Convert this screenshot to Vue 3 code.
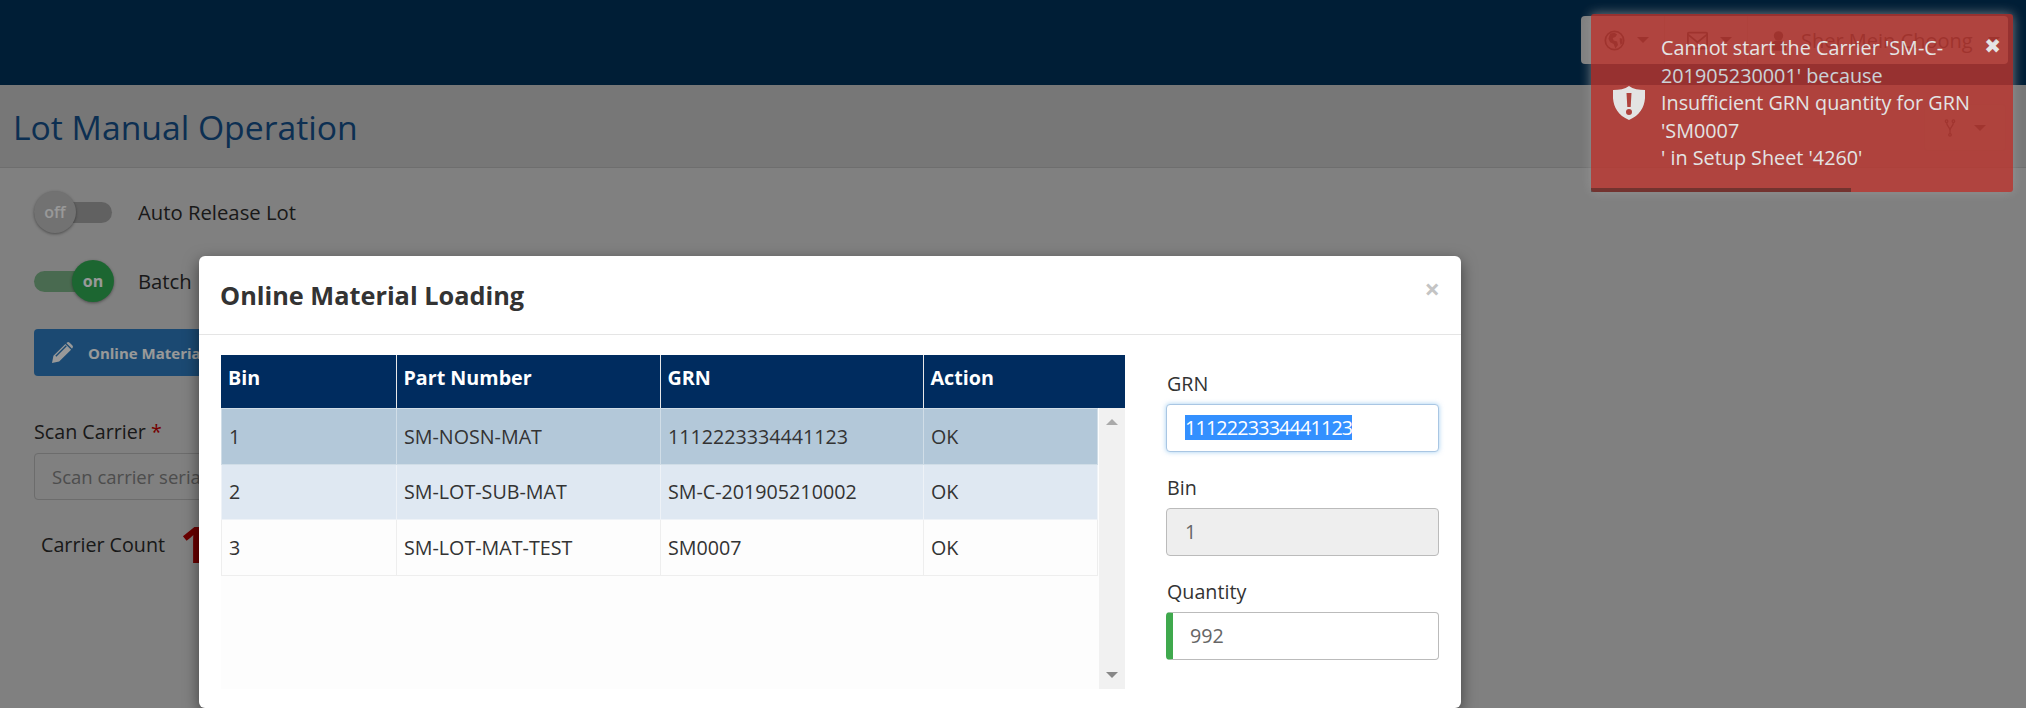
<template>
  <div class="page">
    <header class="top-bar">
      <div class="user-tools">
        <div class="tool globe-tool">
          <svg class="tool-icon" viewBox="0 0 24 24"><circle cx="12" cy="12" r="10.5" /><path class="land" d="M7 4l5-1 3 2-2 3-3 1 1 3 4 1 1 4-3 4-2-5-4-2-2-4zM18 9l3 1 0 5-2 2-1-4z" /></svg>
          <span class="caret"></span>
        </div>
        <div class="tool mail-tool">
          <svg class="tool-icon" viewBox="0 0 24 20"><rect x="1" y="1" width="22" height="18" rx="1" /><path d="M1 3l11 9 11-9" /></svg>
          <span class="caret"></span>
        </div>
        <div class="tool user-tool">
          <svg class="user-icon" viewBox="0 0 16 22"><circle cx="8" cy="6" r="5" /><path d="M0 22v-5c0-4 3-6 8-6s8 2 8 6v5z" /></svg>
          <span class="user-name">Sher Mein Choong</span>
          <span class="caret"></span>
        </div>
      </div>
    </header>

    <section class="page-head">
      <h1 class="page-title">Lot Manual Operation</h1>
      <div class="fork-btn">
        <svg class="fork-icon" viewBox="0 0 14 22"><path d="M3 4c0 6 4 5 4 10v4M11 4c0 6-4 5-4 10" /><circle cx="3" cy="3" r="1.500" /><circle cx="11" cy="3" r="1.500" /><circle cx="7" cy="19" r="1.500" /></svg>
        <span class="caret"></span>
      </div>
    </section>

    <main class="content">
      <div class="switch-row">
        <div class="switch">
          <span class="knob knob-off">off</span>
        </div>
        <span class="switch-label">Auto Release Lot</span>
      </div>
      <div class="switch-row">
        <div class="switch switch-on">
          <span class="knob knob-on">on</span>
        </div>
        <span class="switch-label">Batch</span>
      </div>

      <button class="load-btn">
        <svg class="pencil" viewBox="0 0 22 22"><path d="M0 22l1.500-7.500L14 2l6 6L7.500 20.500zM15.500 .8c1-1 2-1 3 0l2.700 2.700c1 1 1 2 0 3L21 7l-6-6z" /><path class="pencil-line" d="M4 15L15 4" /></svg>
        Online Material Loading
      </button>

      <label class="scan-label">Scan Carrier <span class="req">*</span></label>
      <div class="scan-input">Scan carrier serial</div>

      <div class="count-row">
        <span class="count-label">Carrier Count</span>
        <span class="count-value">1</span>
      </div>
    </main>

    <div class="overlay"></div>

    <div class="modal">
      <div class="modal-head">
        <h4 class="modal-title">Online Material Loading</h4>
        <span class="modal-close">×</span>
      </div>
      <div class="modal-body">
        <div class="grid-box">
          <table class="grid-head">
            <colgroup><col class="c1"><col class="c2"><col class="c3"><col></colgroup>
            <thead>
              <tr>
                <th v-for="c in columns" :key="c">{{ c }}</th>
              </tr>
            </thead>
          </table>
          <div class="grid-scroll">
            <table class="grid-rows">
              <colgroup><col class="c1"><col class="c2"><col class="c3"><col></colgroup>
              <tbody>
                <tr v-for="(r, i) in rows" :key="r.bin" :class="'row-' + i">
                  <td>{{ r.bin }}</td>
                  <td>{{ r.part }}</td>
                  <td>{{ r.grn }}</td>
                  <td>{{ r.action }}</td>
                </tr>
              </tbody>
            </table>
            <div class="scrollbar">
              <span class="arrow-up"></span>
              <span class="arrow-down"></span>
            </div>
          </div>
        </div>

        <form class="side-form">
          <label>GRN</label>
          <div class="field field-focus"><span class="selected">1112223334441123</span></div>
          <label>Bin</label>
          <div class="field field-disabled">1</div>
          <label>Quantity</label>
          <div class="field field-qty">992</div>
        </form>
      </div>
    </div>

    <div class="toast">
      <svg class="shield" viewBox="0 0 32 34"><path fill-rule="evenodd" d="M16 0c4 3 10 4 16 4 1 13-2 24-16 30C2 28-1 17 0 4 6 4 12 3 16 0zM13.500 7l.8 14h3.400l.8-14zM16 23a3 3 0 1 0 0 6 3 3 0 0 0 0-6z" /></svg>
      <div class="toast-msg">
        Cannot start the Carrier 'SM-C-201905230001' because Insufficient GRN quantity for GRN 'SM0007<br>' in Setup Sheet '4260'
      </div>
      <span class="toast-close">✖</span>
      <div class="toast-progress"></div>
    </div>
  </div>
</template>

<script setup>
const columns = ['Bin', 'Part Number', 'GRN', 'Action']

const rows = [
  { bin: 1, part: 'SM-NOSN-MAT', grn: '1112223334441123', action: 'OK' },
  { bin: 2, part: 'SM-LOT-SUB-MAT', grn: 'SM-C-201905210002', action: 'OK' },
  { bin: 3, part: 'SM-LOT-MAT-TEST', grn: 'SM0007', action: 'OK' },
]
</script>

<style>
html, body {
  margin: 0;
  overflow: hidden;
}
</style>

<style scoped>
.page {
  position: relative;
  height: 708px;
  overflow: hidden;
  background: #d5d5d5;
  font-family: "Open Sans", sans-serif;
  font-size: 19.7px;
  color: #2b2b2b;
}

.top-bar {
  height: 85px;
  background: #00325a;
  display: flex;
  justify-content: flex-end;
  align-items: flex-start;
  padding: 16px 18px 0 0;
  box-sizing: border-box;
}

.user-tools {
  display: flex;
  height: 48px;
  background: #d5d5d5;
  border-radius: 4px;
}

.tool {
  display: flex;
  align-items: center;
  gap: 12px;
  box-sizing: border-box;
  padding-left: 23px;
  border-right: 1px solid #c4c4c4;
}

.tool:last-child {
  border-right: none;
}

.globe-tool {
  width: 84px;
}

.mail-tool {
  width: 83px;
  padding-left: 22px;
}

.user-tool {
  width: 260px;
  gap: 15px;
}

.tool-icon {
  width: 21px;
  height: 21px;
  fill: none;
  stroke: #474747;
  stroke-width: 2;
}

.tool-icon .land {
  fill: #474747;
  stroke: none;
}

.user-icon {
  width: 15px;
  height: 21px;
  fill: #474747;
}

.user-name {
  font-size: 20px;
  color: #474747;
  white-space: nowrap;
}

.caret {
  width: 0;
  height: 0;
  border-left: 6px solid transparent;
  border-right: 6px solid transparent;
  border-top: 6px solid #474747;
}

.page-head {
  height: 83px;
  box-sizing: border-box;
  background: #c6c6c6;
  border-bottom: 1px solid #b8b8b8;
  display: flex;
  align-items: center;
  justify-content: space-between;
  padding: 2px 20px 0 13px;
}

.page-title {
  margin: 0;
  font-size: 33.7px;
  font-weight: 400;
  color: #144f89;
}

.fork-btn {
  width: 82px;
  height: 47px;
  box-sizing: border-box;
  margin-top: 1px;
  background: #cccccc;
  border: 1px solid #c0c0c0;
  border-radius: 4px;
  display: flex;
  align-items: center;
  justify-content: center;
  gap: 18px;
}

.fork-icon {
  width: 12px;
  height: 20px;
  fill: none;
  stroke: #555;
  stroke-width: 1.500;
}

.fork-btn .caret {
  border-top-color: #555;
}

.content {
  padding: 23px 34px 0;
  display: flex;
  flex-direction: column;
  align-items: flex-start;
}

.switch-row {
  display: flex;
  align-items: center;
  height: 42px;
  margin-bottom: 27px;
}

.switch {
  position: relative;
  width: 78px;
  height: 21px;
  border-radius: 11px;
  background: #a2a2a2;
  margin-right: 26px;
}

.switch-on {
  background: #7bb185;
}

.knob {
  position: absolute;
  top: -11px;
  width: 42px;
  height: 42px;
  border-radius: 50%;
  display: flex;
  align-items: center;
  justify-content: center;
  font-size: 16px;
  font-weight: 600;
  box-shadow: 0 1px 3px rgba(0, 0, 0, 0.4);
}

.knob-off {
  left: 0;
  background: #bebebe;
  color: #fff;
}

.knob-on {
  left: 38px;
  background: #30aa53;
  color: #fff;
  font-weight: 700;
}

.switch-label {
  font-size: 20.3px;
  font-weight: 500;
}

.load-btn {
  height: 47px;
  width: 340px;
  margin-top: 0;
  padding: 0 0 0 18px;
  border: none;
  border-radius: 4px;
  background: #2d7bbe;
  color: #fff;
  font-family: inherit;
  font-size: 15px;
  font-weight: 700;
  display: flex;
  align-items: center;
  gap: 15px;
  white-space: nowrap;
}

.pencil {
  width: 21px;
  height: 21px;
  fill: #fff;
}

.pencil-line {
  fill: none;
  stroke: #2d7bbe;
  stroke-width: 1.500;
}

.scan-label {
  margin-top: 44px;
  font-weight: 500;
  line-height: 24px;
}

.req {
  color: #c40000;
}

.scan-input {
  margin-top: 9px;
  width: 340px;
  height: 47px;
  box-sizing: border-box;
  border: 1px solid #b4b4b4;
  border-radius: 4px;
  padding-left: 17px;
  line-height: 45px;
  font-size: 18.5px;
  color: #808080;
  background: #d5d5d5;
}

.count-row {
  display: flex;
  align-items: center;
  gap: 15px;
  margin: 14px 0 0 7px;
  height: 60px;
}

.count-value {
  font-size: 50px;
  font-weight: 700;
  color: #b10000;
}

.overlay {
  position: absolute;
  inset: 0;
  background: rgba(0, 0, 0, 0.4);
}

.modal {
  position: absolute;
  left: 199px;
  top: 256px;
  width: 1262px;
  height: 452px;
  background: #fff;
  border-radius: 6px;
  box-shadow: 0 5px 15px rgba(0, 0, 0, 0.5);
}

.modal-head {
  height: 79px;
  box-sizing: border-box;
  border-bottom: 1px solid #e5e5e5;
  display: flex;
  align-items: center;
  justify-content: space-between;
  padding: 0 22px 0 21px;
}

.modal-title {
  margin: 0;
  font-size: 25.3px;
  font-weight: 700;
  color: #333;
}

.modal-close {
  font-size: 27px;
  font-weight: 700;
  color: #c4c4c4;
  margin: -14px -1px 0 0;
}

.modal-body {
  display: flex;
  padding: 20px 22px 0;
}

.grid-box {
  width: 904px;
}

table {
  border-collapse: collapse;
  table-layout: fixed;
}

.c1 { width: 175px; }
.c2 { width: 264px; }
.c3 { width: 263px; }

.grid-head {
  width: 904px;
}

.grid-head th {
  height: 53px;
  box-sizing: border-box;
  background: #002c5f;
  color: #fff;
  font-size: 19.7px;
  font-weight: 700;
  text-align: left;
  vertical-align: top;
  padding: 9px 7px 0;
  border-left: 1.5px solid #e8e8e8;
}

.grid-head th:first-child {
  border-left: none;
}

.grid-scroll {
  display: flex;
  height: 281px;
  background: #fdfdfd;
}

.grid-rows {
  width: 877px;
  height: 168px;
  flex: none;
}

.grid-rows td {
  padding: 0 7px;
  border: 1.5px solid #eee;
  color: #333;
}

.row-0 td {
  background: #b3c8d9;
  border-color: #d0dde7;
}

.row-1 td {
  background: #dfe8f2;
  border-color: #eef2f7;
}

.row-2 td {
  background: #fdfdfd;
}

.scrollbar {
  position: relative;
  width: 26px;
  margin-left: 1px;
  background: #f1f1f1;
}

.arrow-up,
.arrow-down {
  position: absolute;
  left: 7px;
  width: 0;
  height: 0;
  border-left: 6px solid transparent;
  border-right: 6px solid transparent;
}

.arrow-up {
  top: 11px;
  border-bottom: 6px solid #aaa;
}

.arrow-down {
  bottom: 11px;
  border-top: 6px solid #888;
}

.side-form {
  margin-left: 41px;
  width: 275px;
  display: flex;
  flex-direction: column;
}

.side-form label {
  line-height: 24px;
  margin: 17px 0 8px 1px;
  color: #333;
}

.side-form label ~ label {
  margin-top: 24px;
}

.field {
  height: 48px;
  box-sizing: border-box;
  border: 1px solid #bbb;
  border-radius: 4px;
  padding-left: 18px;
  line-height: 46px;
  color: #666;
  background: #fff;
}

.field-focus {
  border-color: #a9c6e3;
  box-shadow: 0 0 5px rgba(102, 175, 233, 0.6);
}

.selected {
  background: #3390ff;
  color: #fff;
  display: inline-block;
  line-height: 25px;
  letter-spacing: -0.8px;
}

.field-disabled {
  background: #eee;
}

.field-qty {
  border-left: 7px solid #3fa94d;
  padding-left: 17px;
}

.toast {
  position: absolute;
  left: 1591px;
  top: 14px;
  width: 422px;
  height: 178px;
  box-sizing: border-box;
  padding: 20px 34px 0 70px;
  background: #bd362f;
  color: #fff;
  opacity: 0.8;
  border-radius: 3px;
  box-shadow: 0 0 12px #999;
  line-height: 27.5px;
  font-size: 19.8px;
}

.shield {
  position: absolute;
  left: 22px;
  top: 72px;
  width: 32px;
  height: 34px;
  fill: #fff;
}

.toast-close {
  position: absolute;
  right: 12px;
  top: 18px;
  font-family: "DejaVu Sans", sans-serif;
  font-size: 20px;
  line-height: 28px;
}

.toast-progress {
  position: absolute;
  left: 0;
  bottom: 0;
  width: 260px;
  height: 4px;
  background: rgba(0, 0, 0, 0.4);
}
</style>
